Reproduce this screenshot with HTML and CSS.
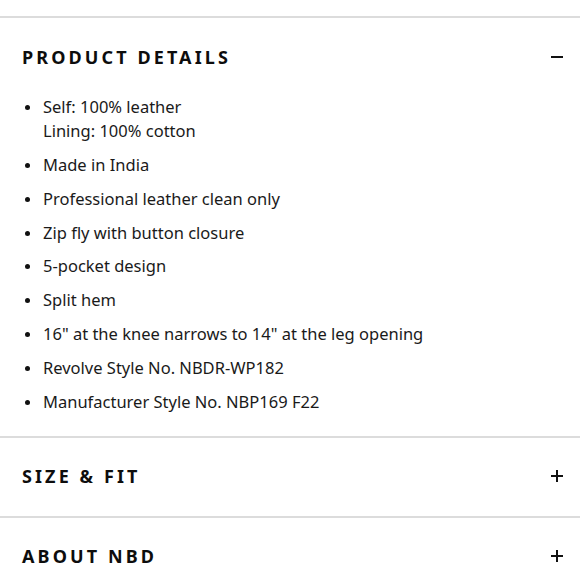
FILE: index.html
```html
<!DOCTYPE html>
<html>
<head>
<meta charset="utf-8">
<link rel="stylesheet" href="styles.css">
</head>
<body>
<div class="accordion">
  <section class="panel open">
    <div class="panel-head">
      <h2 class="panel-title">PRODUCT DETAILS</h2>
      <span class="icon minus"></span>
    </div>
    <ul class="details">
      <li>Self: 100% leather<br>Lining: 100% cotton</li>
      <li>Made in India</li>
      <li>Professional leather clean only</li>
      <li>Zip fly with button closure</li>
      <li>5-pocket design</li>
      <li>Split hem</li>
      <li>16" at the knee narrows to 14" at the leg opening</li>
      <li>Revolve Style No. NBDR-WP182</li>
      <li>Manufacturer Style No. NBP169 F22</li>
    </ul>
  </section>
  <section class="panel">
    <div class="panel-head">
      <h2 class="panel-title">SIZE &amp; FIT</h2>
      <span class="icon plus"></span>
    </div>
  </section>
  <section class="panel">
    <div class="panel-head">
      <h2 class="panel-title">ABOUT NBD</h2>
      <span class="icon plus"></span>
    </div>
  </section>
</div>
</body>
</html>
```

FILE: styles.css
```css
html, body {
  margin: 0;
  padding: 0;
  background: #fff;
}
body {
  font-family: "Noto Sans", "Open Sans", sans-serif;
  color: #111;
}
.accordion {
  padding-top: 16px;
}
.panel {
  border-top: 2px solid #dcdcdc;
}
.panel-head {
  box-sizing: border-box;
  height: 78px;
  display: flex;
  align-items: center;
  justify-content: space-between;
  padding: 0 17px 2px 22px;
}
.open .panel-head {
  padding-bottom: 0;
}
.panel-title {
  margin: 0;
  font-size: 18px;
  font-weight: 700;
  letter-spacing: 3.1px;
  color: #0d0d0d;
}
.icon {
  position: relative;
  width: 12px;
  height: 12px;
}
.icon::before,
.icon::after {
  content: "";
  position: absolute;
  background: #111;
}
.icon::before {
  left: 0;
  top: 5px;
  width: 12px;
  height: 2px;
}
.plus::after {
  left: 5px;
  top: 0;
  width: 2px;
  height: 12px;
}
.details {
  list-style: none;
  margin: -1px 0 0;
  padding: 0 22px 22px 43px;
  display: flex;
  flex-direction: column;
  gap: 9.85px;
}
.details li {
  position: relative;
  font-size: 16.5px;
  line-height: 24px;
  color: #1a1a1a;
}
.details li::before {
  content: "";
  position: absolute;
  left: -18px;
  top: 10px;
  width: 5px;
  height: 5px;
  border-radius: 50%;
  background: #111;
}
```
